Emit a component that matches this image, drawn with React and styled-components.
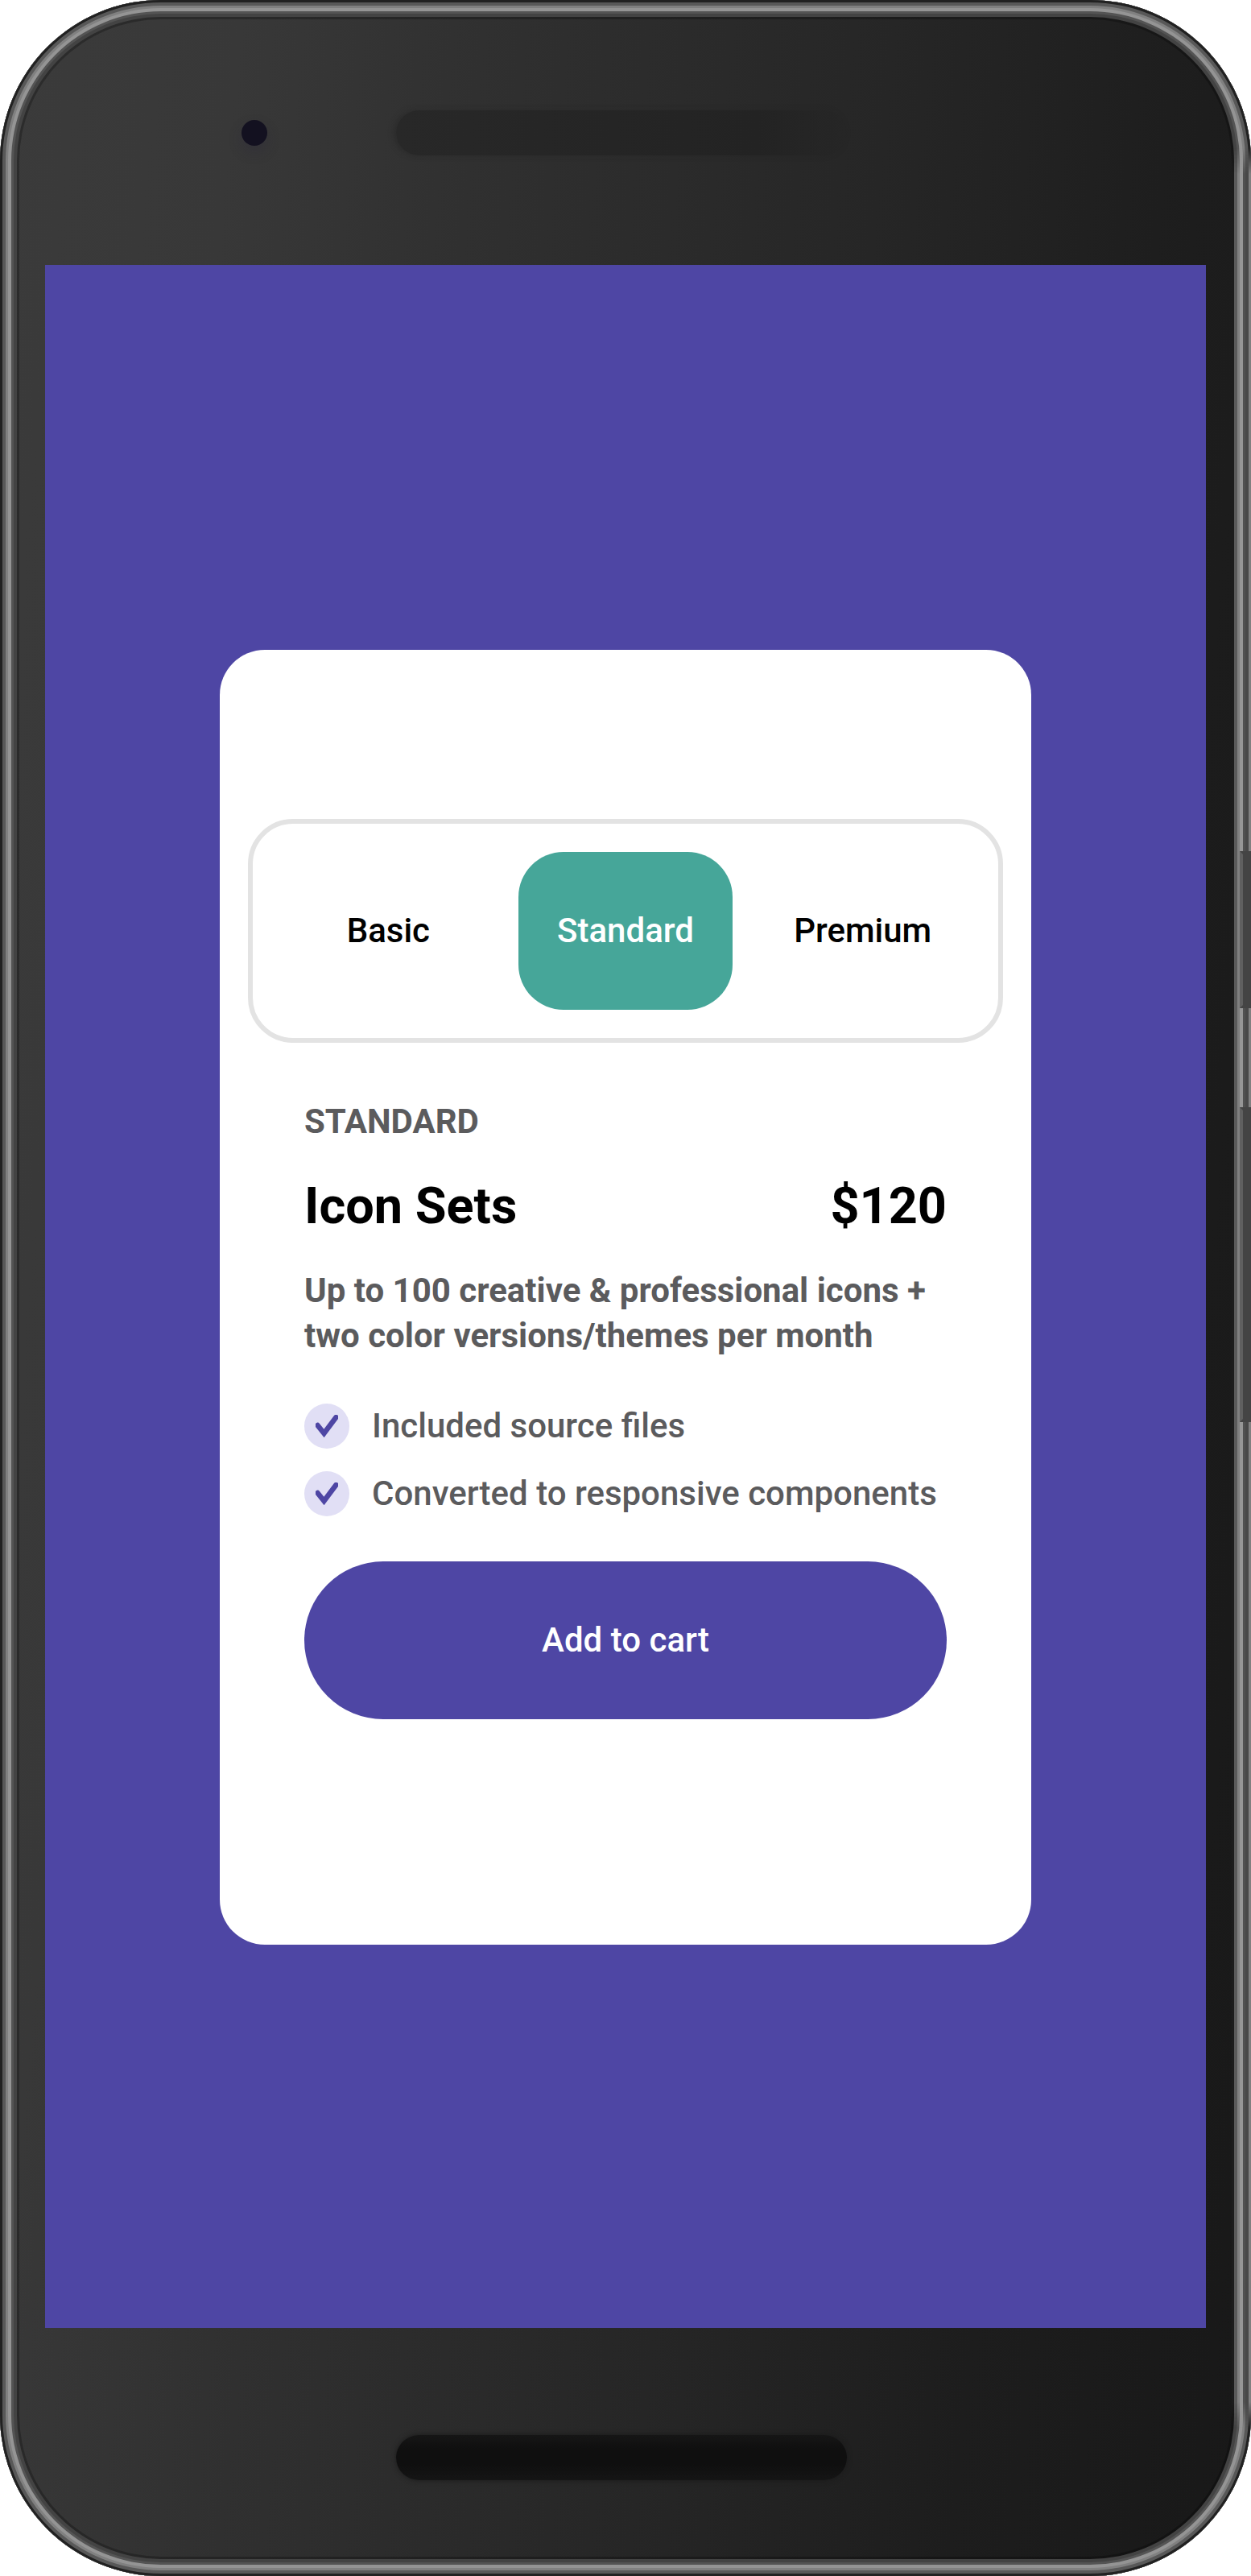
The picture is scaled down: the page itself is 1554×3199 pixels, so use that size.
import React, { useState } from "react";
import styled, { createGlobalStyle } from "styled-components";

const purple = "#4e46a4";

const GlobalStyle = createGlobalStyle`
  *, *::before, *::after { box-sizing: border-box; }
  body {
    margin: 0;
    background: #ffffff;
    font-family: Roboto, "Liberation Sans", sans-serif;
  }
  h1, h2, p, ul { margin: 0; padding: 0; }
  button { border: 0; font-family: inherit; cursor: pointer; }
`;

const Phone = styled.div`
  position: relative;
  overflow: hidden;
  border-radius: 200px;
  background: linear-gradient(
    96deg,
    #3b3b3b 0%,
    #383838 16%,
    #303030 32%,
    #262626 59%,
    #1d1d1d 80%,
    #181818 100%
  );
  box-shadow:
    inset 0 0 0 3px #212121,
    inset 0 0 0 7px #585858,
    inset 0 0 0 10px #808080,
    inset 0 0 0 14px #949494,
    inset 0 0 0 17px #545454,
    inset 0 0 0 21px #434343,
    inset 0 0 0 24px rgba(0, 0, 0, 0.25);
`;

const Rail = styled.div`
  position: absolute;
  top: 184px;
  bottom: 184px;
  right: 0;
  width: 24px;
  background: linear-gradient(
    to left,
    #808080 3px,
    #484848 3px 7px,
    #505050 7px 10px,
    #969696 10px 14px,
    #808080 14px 17px,
    #5a5a5a 17px 21px,
    #1c1c1c 21px
  );
  mask-image: linear-gradient(
    transparent,
    #000000 32px,
    #000000 calc(100% - 32px),
    transparent
  );
`;

const SideKey = styled.div`
  position: absolute;
  right: 0;
  top: ${(p) => p.$top}px;
  width: 14px;
  height: ${(p) => p.$length}px;
  background: #444444;
  border-left: 4px solid #606060;
  border-top: 4px solid #444444;
  border-bottom: 4px solid #444444;
`;

const TopBezel = styled.div`
  display: flex;
  align-items: center;
  gap: 160px;
  height: 329px;
  padding-left: 300px;
`;

const Camera = styled.div`
  width: 32px;
  height: 32px;
  border-radius: 50%;
  background: #131120;
  box-shadow: 0 8px 16px rgba(40, 38, 60, 0.3);
`;

const Speaker = styled.div`
  flex: 0 1 560px;
  height: 56px;
  border-radius: 28px;
  background: ${(p) =>
    p.$deep
      ? "linear-gradient(#161616, #0f0f0f 30%, #0f0f0f 65%, #151515)"
      : "linear-gradient(90deg, #282828, #232323 80%, rgba(35, 35, 35, 0.3))"};
  box-shadow: ${(p) =>
    p.$deep ? "0 0 6px #1a1a1a" : "-3px 0 6px rgba(38, 38, 38, 0.6)"};
`;

const BottomBezel = styled.div`
  display: flex;
  padding: 133px 0 119px 492px;
`;

const Screen = styled.main`
  display: flex;
  justify-content: center;
  margin: 0 56px;
  padding: 478px 0 476px;
  background: ${purple};
`;

const Card = styled.article`
  width: 1008px;
  padding: 210px 35px 280px;
  border-radius: 56px;
  background: #ffffff;
`;

const Tabs = styled.div`
  display: grid;
  grid-template-columns: repeat(3, 1fr);
  justify-items: center;
  padding: 35px 21px;
  border: 6px solid #e3e3e3;
  border-radius: 56px;
`;

const Tab = styled.button`
  width: 266px;
  height: 196px;
  padding: 0;
  border-radius: 56px;
  background: ${(p) => (p.$active ? "#46a699" : "transparent")};
  color: ${(p) => (p.$active ? "#ffffff" : "#000000")};
  font-size: 42px;
  font-weight: 500;
  line-height: 56px;
`;

const Content = styled.section`
  padding: 70px 70px 0;
`;

const PlanName = styled.p`
  color: #5b5b5d;
  font-size: 42px;
  font-weight: 700;
  line-height: 56px;
  text-transform: uppercase;
`;

const TitleRow = styled.div`
  display: flex;
  justify-content: space-between;
  margin: 35px 0;
`;

const Title = styled.h1`
  font-size: 63px;
  font-weight: 700;
  line-height: 84px;
`;

const Price = styled.p`
  font-size: 63px;
  font-weight: 700;
  line-height: 84px;
`;

const Description = styled.p`
  color: #5b5b5d;
  font-size: 42px;
  font-weight: 700;
  line-height: 56px;
`;

const Features = styled.ul`
  display: flex;
  flex-direction: column;
  gap: 28px;
  margin: 56px 0;
  list-style: none;
`;

const Feature = styled.li`
  display: flex;
  gap: 28px;
  color: #5b5b5d;
  font-size: 42px;
  font-weight: 500;
  line-height: 56px;
  white-space: nowrap;
`;

const Badge = styled.span`
  display: flex;
  align-items: center;
  justify-content: center;
  flex: none;
  width: 56px;
  height: 56px;
  border-radius: 50%;
  background: #e1dff5;
`;

const CartButton = styled.button`
  display: block;
  width: 100%;
  height: 196px;
  border-radius: 98px;
  background: ${purple};
  color: #ffffff;
  font-size: 42px;
  font-weight: 500;
  line-height: 56px;
`;

function Check() {
  return (
    <svg width="28" height="28" viewBox="0 0 28 28" aria-hidden="true">
      <path
        d="M2.5 13 L10.5 23 L25.5 3"
        fill="none"
        stroke={purple}
        strokeWidth="6.4"
        strokeLinecap="round"
      />
    </svg>
  );
}

const plans = ["Basic", "Standard", "Premium"];
const features = ["Included source files", "Converted to responsive components"];

export default function App() {
  const [plan, setPlan] = useState("Standard");

  return (
    <>
      <GlobalStyle />
      <Phone>
        <Rail />
        <SideKey $top={1057} $length={195} />
        <SideKey $top={1375} $length={391} />
        <TopBezel>
          <Camera />
          <Speaker />
        </TopBezel>
        <Screen>
          <Card>
            <Tabs role="tablist" aria-label="Plan">
              {plans.map((name) => (
                <Tab
                  key={name}
                  type="button"
                  role="tab"
                  aria-selected={plan === name}
                  $active={plan === name}
                  onClick={() => setPlan(name)}
                >
                  {name}
                </Tab>
              ))}
            </Tabs>
            <Content>
              <PlanName>{plan}</PlanName>
              <TitleRow>
                <Title>Icon Sets</Title>
                <Price>$120</Price>
              </TitleRow>
              <Description>
                Up to 100 creative &amp; professional icons + two color
                versions/themes per month
              </Description>
              <Features>
                {features.map((text) => (
                  <Feature key={text}>
                    <Badge>
                      <Check />
                    </Badge>
                    {text}
                  </Feature>
                ))}
              </Features>
              <CartButton type="button">Add to cart</CartButton>
            </Content>
          </Card>
        </Screen>
        <BottomBezel>
          <Speaker $deep />
        </BottomBezel>
      </Phone>
    </>
  );
}
